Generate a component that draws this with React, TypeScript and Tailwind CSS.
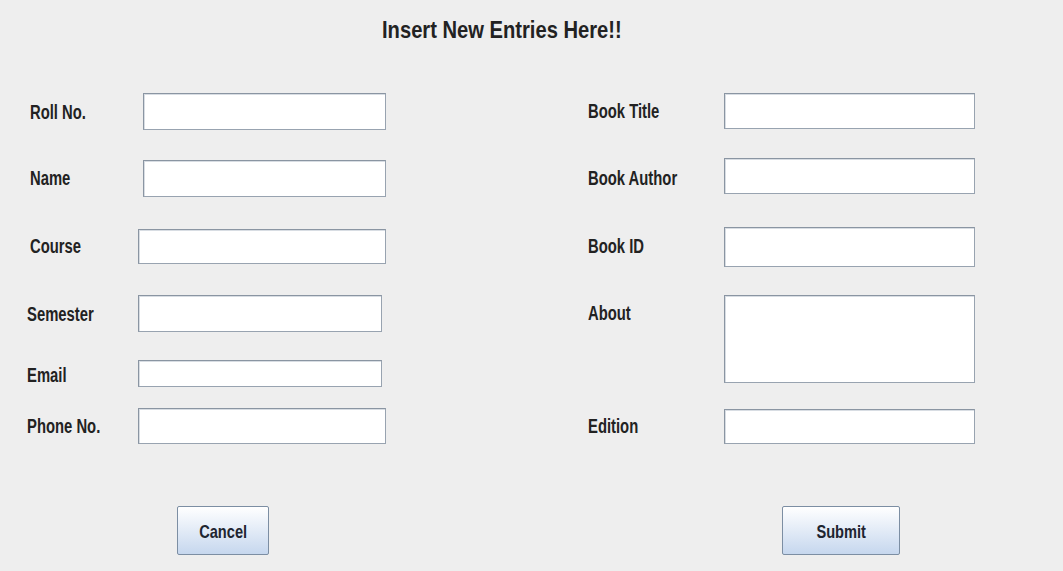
type Field = {
  label: string;
  labelX: number;
  inputX: number;
  width: number;
  height: number;
  gap: number;
  dy: number;
  top?: boolean;
};

// left side rows (Swing null layout, so every row keeps its own offsets)
const leftFields: Field[] = [
  { label: "Roll No.", labelX: 30, inputX: 143, width: 243, height: 37, gap: 0, dy: 1.5 },
  { label: "Name", labelX: 30, inputX: 143, width: 243, height: 37, gap: 30, dy: 0.5 },
  { label: "Course", labelX: 30, inputX: 138, width: 248, height: 35, gap: 32, dy: 0.5 },
  { label: "Semester", labelX: 27, inputX: 138, width: 244, height: 37, gap: 31, dy: 1.5 },
  { label: "Email", labelX: 27, inputX: 138, width: 244, height: 27, gap: 28, dy: 2.5 },
  { label: "Phone No.", labelX: 27, inputX: 138, width: 248, height: 36, gap: 21, dy: 1 },
];

// right side rows, offsets measured from x = 560
const rightFields: Field[] = [
  { label: "Book Title", labelX: 28, inputX: 164, width: 251, height: 36, gap: 0, dy: 1 },
  { label: "Book Author", labelX: 28, inputX: 164, width: 251, height: 36, gap: 29, dy: 3 },
  { label: "Book ID", labelX: 28, inputX: 164, width: 251, height: 40, gap: 33, dy: 0 },
  { label: "About", labelX: 28, inputX: 164, width: 251, height: 88, gap: 28, dy: 9, top: true },
  { label: "Edition", labelX: 28, inputX: 164, width: 251, height: 35, gap: 26, dy: 0.5 },
];

const FieldRow = ({ field }: { field: Field }) => {
  // label sits in a zero height box so it never changes the row height
  const labelBox = field.top
    ? { width: field.inputX - field.labelX, marginTop: field.dy }
    : { width: field.inputX - field.labelX, marginTop: field.dy * 2 };

  return (
    <div
      className={`flex ${field.top ? "items-start" : "items-center"}`}
      style={{ marginTop: field.gap, paddingLeft: field.labelX }}
    >
      <div className={`flex shrink-0 leading-none ${field.top ? "" : "h-0 items-center"}`} style={labelBox}>
        {/* Swing font here is a narrow bold, so squeeze the Arial-metric font */}
        <span className="inline-block origin-left scale-x-[0.76] whitespace-nowrap text-[19.5px] font-bold leading-none text-[#222222]">
          {field.label}
        </span>
      </div>
      <div
        className="bg-white border border-[#98a3b0] border-t-[#8a95a2] border-l-[#8a95a2] shadow-[inset_1px_1px_0_#d8dde3]"
        style={{ width: field.width, height: field.height }}
      />
    </div>
  );
};

const JButton = ({ text, className }: { text: string; className: string }) => {
  return (
    <button
      className={`flex h-[49px] items-center justify-center rounded-[2px] border border-[#7c8ea3] bg-gradient-to-b from-[#ffffff] to-[#c6d7ee] ${className}`}
    >
      <span className="inline-block scale-x-[0.77] whitespace-nowrap pt-[2px] text-[19px] font-bold leading-none text-[#1e2530]">
        {text}
      </span>
    </button>
  );
};

const App = () => {
  return (
    <div className="flex h-[571px] w-[1063px] flex-col bg-[#eeeeee] font-['Liberation_Sans',Arial,sans-serif]">
      {/* TITLE */}
      <div className="h-[93px] pl-[382px] pt-[18px]">
        <h1 className="inline-block origin-left scale-x-[0.84] whitespace-nowrap text-[24px] font-bold leading-none text-[#222222]">
          Insert New Entries Here!!
        </h1>
      </div>
      {/* FORM FIELDS */}
      <div className="flex">
        <div className="flex w-[560px] flex-col">
          {leftFields.map((f) => (
            <FieldRow key={f.label} field={f} />
          ))}
        </div>
        <div className="flex flex-col">
          {rightFields.map((f) => (
            <FieldRow key={f.label} field={f} />
          ))}
        </div>
      </div>
      {/* BUTTONS */}
      <div className="mt-[62px] flex">
        <JButton text="Cancel" className="ml-[177px] w-[92px]" />
        <JButton text="Submit" className="ml-[513px] w-[118px]" />
      </div>
    </div>
  );
};

export default App;
